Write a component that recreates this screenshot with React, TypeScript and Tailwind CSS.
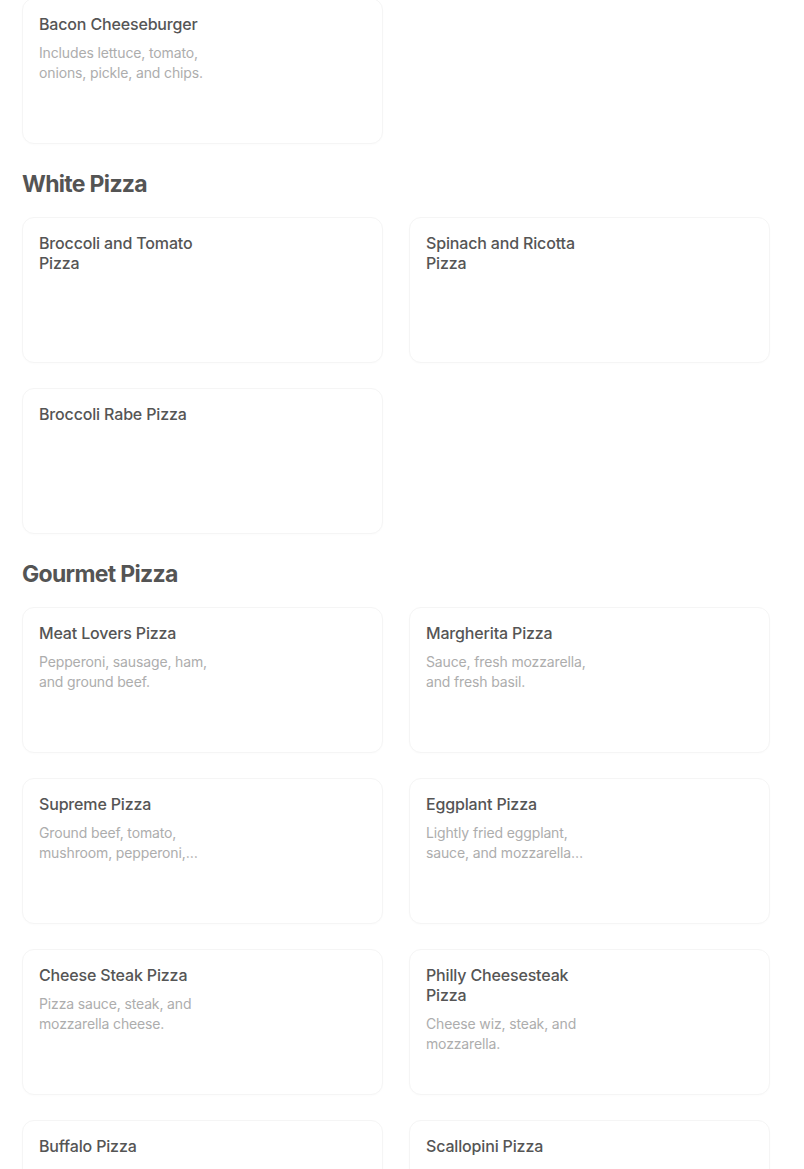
import React from 'react';

type Item = { name: string; desc?: string };

const sections: { title?: string; items: Item[] }[] = [
    {
        items: [{ name: 'Bacon Cheeseburger', desc: 'Includes lettuce, tomato, onions, pickle, and chips.' }],
    },
    {
        title: 'White Pizza',
        items: [
            { name: 'Broccoli and Tomato Pizza' },
            { name: 'Spinach and Ricotta Pizza' },
            { name: 'Broccoli Rabe Pizza' },
        ],
    },
    {
        title: 'Gourmet Pizza',
        items: [
            { name: 'Meat Lovers Pizza', desc: 'Pepperoni, sausage, ham, and ground beef.' },
            { name: 'Margherita Pizza', desc: 'Sauce, fresh mozzarella, and fresh basil.' },
            { name: 'Supreme Pizza', desc: 'Ground beef, tomato, mushroom, pepperoni, onions, peppers, and sausage.' },
            { name: 'Eggplant Pizza', desc: 'Lightly fried eggplant, sauce, and mozzarella cheese.' },
            { name: 'Cheese Steak Pizza', desc: 'Pizza sauce, steak, and mozzarella cheese.' },
            { name: 'Philly Cheesesteak Pizza', desc: 'Cheese wiz, steak, and mozzarella.' },
            { name: 'Buffalo Pizza', desc: 'Buffalo chicken, hot sauce, and mozzarella.' },
            { name: 'Scallopini Pizza', desc: 'Breaded chicken, mushrooms, and mozzarella.' },
        ],
    },
];

const MenuCard: React.FC<{ item: Item }> = ({ item }) => (
    <div className="h-[146px] rounded-xl border border-[#f5f5f5] bg-white pl-4 pr-4 pt-[15px] shadow-[0_1px_2px_rgba(0,0,0,0.015)]">
        <div className="w-[176px]">
            <p className="text-[16px] leading-5 font-medium tracking-[-0.01em] text-[#555555]">{item.name}</p>
            {item.desc && (
                <p className="mt-[9px] text-[14px] leading-5 tracking-[-0.01em] text-[#adadad] line-clamp-2">{item.desc}</p>
            )}
        </div>
    </div>
);

export default function App() {
    return (
        <div className="min-h-screen bg-white pl-[22px] pr-[34px] -mt-[2px]" style={{ fontFamily: 'Inter, "Noto Sans", sans-serif' }}>
            {sections.map((s, i) => (
                <div key={i} className={i > 0 ? 'mt-6' : ''}>
                    {s.title && (
                        <h2 className="mb-[17px] pt-[1px] text-[23px] leading-[31px] font-bold tracking-[-0.03em] text-[#545454]">{s.title}</h2>
                    )}
                    <div className="grid grid-cols-2 gap-x-[26px] gap-y-[25px]">
                        {s.items.map(item => (
                            <MenuCard key={item.name} item={item} />
                        ))}
                    </div>
                </div>
            ))}
        </div>
    );
}
